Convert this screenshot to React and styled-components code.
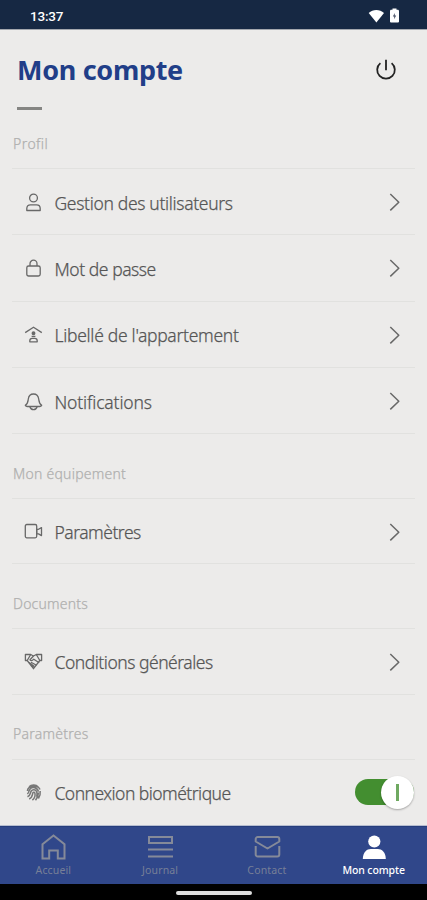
import { useState } from 'react';
import styled, { createGlobalStyle } from 'styled-components';

const GlobalStyle = createGlobalStyle`
    * {
        box-sizing: border-box;
    }

    body {
        margin: 0;
        background: #ecebea;
        font-family: "Noto Sans", "Open Sans", sans-serif;
    }
`;

const Screen = styled.div`
    display: flex;
    flex-direction: column;
    width: 427px;
    height: 900px;
    overflow: hidden;
    background: #ecebea;
`;

const StatusBar = styled.div`
    display: flex;
    flex: none;
    align-items: center;
    justify-content: space-between;
    height: 29px;
    padding: 3px 26px 0 30px;
    background: #162843;
    box-shadow: 0 1px 0 #a3a7ae;
`;

const Clock = styled.span`
    color: #fff;
    font-family: Roboto, sans-serif;
    font-size: 13.5px;
    font-weight: 500;
    letter-spacing: -0.2px;
`;

const StatusIcons = styled.div`
    display: flex;
    align-items: center;
    gap: 4px;
    margin-top: -1px;
`;

const Header = styled.header`
    display: flex;
    flex: none;
    align-items: center;
    justify-content: space-between;
    height: 78px;
    padding: 3px 30px 0 17px;
`;

const Title = styled.h1`
    margin: 0;
    color: #213e88;
    font-size: 27px;
    font-weight: 700;
    line-height: 38px;
    letter-spacing: -0.3px;
`;

const PowerButton = styled.button`
    display: flex;
    padding: 0;
    border: 0;
    background: none;
`;

const TitleRule = styled.div`
    flex: none;
    width: 25px;
    height: 3px;
    margin: 0 0 0 17px;
    background: #858583;
`;

const Content = styled.main`
    flex: 1;
    min-height: 0;
    padding: 8px 12px 0;
    overflow: hidden;
`;

const SectionTitle = styled.h2`
    display: flex;
    align-items: center;
    height: ${({ $first }) => ($first ? 50 : 64)}px;
    margin: 0;
    padding: ${({ $first }) => ($first ? 0 : 14)}px 0 0 1px;
    color: #b0b0af;
    font-size: 14px;
    font-weight: 300;
    letter-spacing: ${({ $spacing }) => $spacing || 0}px;
    -webkit-text-stroke: 0.25px #b0b0af;
`;

const List = styled.div`
    border-top: 1px solid #e1e1df;
`;

const Row = styled.div`
    display: flex;
    align-items: center;
    height: ${({ $height }) => $height}px;
    padding: 1px ${({ $toggle }) => ($toggle ? 1 : 14)}px 0 11px;
    border-bottom: 1px solid #e1e1df;
`;

const RowLabel = styled.span`
    flex: 1;
    margin: 1px 0 0 10.5px;
    color: #565656;
    font-size: 17.5px;
    font-weight: 300;
    line-height: 24px;
    white-space: nowrap;
    letter-spacing: ${({ $spacing }) => $spacing || 0}px;
    -webkit-text-stroke: 0.25px #565656;
`;

const Icon = styled.svg`
    flex: none;
    fill: none;
    stroke: ${({ $color }) => $color || '#686868'};
    stroke-width: ${({ $weight }) => $weight || 1.3};
    stroke-linejoin: round;
`;

const Toggle = styled.button`
    display: flex;
    justify-content: ${({ $on }) => ($on ? 'flex-end' : 'flex-start')};
    align-items: center;
    width: 59px;
    height: 26px;
    margin-top: -1px;
    padding: 0;
    border: 0;
    border-radius: 13px;
    background: ${({ $on }) => ($on ? '#438e30' : '#aaa')};
`;

const Knob = styled.span`
    display: flex;
    flex: none;
    align-items: center;
    justify-content: center;
    width: 33px;
    height: 33px;
    border-radius: 50%;
    background: #fff;
    box-shadow: 0 1px 2px rgba(0, 0, 0, 0.3);
`;

const KnobMark = styled.span`
    width: 3px;
    height: 17px;
    background: #6fa961;
`;

const TabBar = styled.nav`
    display: grid;
    flex: none;
    grid-template-columns: repeat(4, 1fr);
    height: 58px;
    border-top: 1px solid #263d7c;
    background: #30478a;
    box-shadow: 0 -1px 0 #b6bdd0;
`;

const Tab = styled.a`
    display: flex;
    flex-direction: column;
    align-items: center;
    padding-top: 6px;
    color: ${({ $active }) => ($active ? '#fff' : '#777f97')};
    font-size: 10.5px;
    font-weight: ${({ $active }) => ($active ? 500 : 400)};
    line-height: 14px;
    letter-spacing: ${({ $active }) => ($active ? -0.1 : 0.15)}px;
`;

const TabLabel = styled.span`
    margin-top: 2px;
`;

const GestureBar = styled.div`
    display: flex;
    flex: none;
    align-items: center;
    justify-content: center;
    height: 16px;
    padding-top: 2px;
    background: #000;
`;

const GestureHandle = styled.span`
    width: 76px;
    height: 4px;
    border-radius: 2px;
    background: #dcdcdc;
`;

const icons = {
    user: (
        <>
            <circle cx="10.5" cy="6" r="3.9" />
            <path d="M3.800 18.500v-2c0-2.400 1.500-3.700 3.600-3.700h6.200c2.100 0 3.600 1.300 3.600 3.700v2z" />
        </>
    ),
    lock: (
        <>
            <rect x="3.800" y="8" width="13.400" height="10" rx="1.800" />
            <path d="M7 8V5.700a3.500 3.500 0 0 1 7 0V8" />
        </>
    ),
    home: (
        <>
            <path d="M2.200 8.600 10.500 3.200l8.300 5.400" />
            <circle cx="10.500" cy="9.300" r="1.300" fill="#686868" />
            <path d="M6.800 17.800v-1c0-1.600 1-2.500 2.400-2.500h2.600c1.400 0 2.400.9 2.400 2.500v1z" />
            <path d="M8.600 12.400h3.800" />
        </>
    ),
    bell: (
        <>
            <path d="M2.300 14.300c2.600-1.600 2.600-3.600 3-6.300.4-3 2.300-5 5.200-5s4.800 2 5.200 5c.4 2.700.4 4.700 3 6.300-.4.9-1.100 1.200-2 1.200H4.300c-.9 0-1.600-.3-2-1.200z" />
            <path d="M6.800 15.500c.5 1.800 1.700 3.200 3.700 3.200s3.200-1.400 3.700-3.200" />
        </>
    ),
    camera: (
        <>
            <rect x="2.300" y="3.500" width="11.400" height="13.300" rx="1.500" />
            <path d="M13.700 8.300h1.800l3-1.700v8l-3-1.700h-1.800z" />
        </>
    ),
    handshake: (
        <>
            <path d="M7.700 3.500H2.400v6h1.800l6.300 8.200 6.300-8.200h1.800v-6h-5.300L10.500 5z" />
            <path d="m4.200 9.500 3.500-6M10.500 5 7 8.800c1 1.300 2.600.9 3.800-.6l5.400 3.600M16.800 9.500l-3.500-6M6 11.500l5.500 4M8 11.200l5.500 3M8 14.500l2.500 1.500" />
        </>
    ),
    fingerprint: (
        <g stroke="#777" strokeWidth="1.5">
            <path d="M6 4.800C8.500 2.300 13 2.300 15.200 5M4.400 9c.3-5 10.500-7 12.600-1.500M4.300 12c2-1.500 1-2.700 2.600-4.700 2.400-3 7.600-1.800 8.600 2.300M4.500 14.800c3.400-1.500 2.500-3.800 3.700-5.800 1.300-2 4.700-1.600 5.500.8.500 1.600.4 3.500 0 5M6.200 17c3.300-1.500 3.100-4.100 3.600-6 .3-1 1.800-1 2.100.1.500 2.200 0 5-2.500 7M17.200 9c.4 3.300-.3 5.300-1.800 7.500M12.500 18.200c2-2.300 3-4.600 3-7.600" />
        </g>
    ),
};

const sections = [
    {
        title: 'Profil',
        spacing: 0.45,
        height: 66.3,
        rows: [
            { icon: 'user', label: 'Gestion des utilisateurs', spacing: -0.33 },
            { icon: 'lock', label: 'Mot de passe', spacing: -0.45 },
            { icon: 'home', label: "Libellé de l'appartement", spacing: -0.29 },
            { icon: 'bell', label: 'Notifications', spacing: -0.15 },
        ],
    },
    {
        title: 'Mon équipement',
        spacing: 0.25,
        height: 65.2,
        rows: [{ icon: 'camera', label: 'Paramètres', spacing: -0.5 }],
    },
    {
        title: 'Documents',
        spacing: 0.2,
        height: 65.2,
        rows: [{ icon: 'handshake', label: 'Conditions générales', spacing: -0.48 }],
    },
    {
        title: 'Paramètres',
        spacing: 0.25,
        height: 66.3,
        rows: [{ icon: 'fingerprint', label: 'Connexion biométrique', spacing: -0.53, toggle: true }],
    },
];

const tabs = [
    {
        label: 'Accueil',
        drawing: <path d="M3.500 11.200 14.500 2.500l11 8.700V25.500h-6.700v-8h-8.600v8H3.500z" strokeLinejoin="miter" />,
    },
    {
        label: 'Journal',
        drawing: <path d="M3 4h23v6H3zM2 16.500h25M2 23.500h25" strokeLinejoin="miter" />,
    },
    {
        label: 'Contact',
        drawing: (
            <>
                <path d="M2.700 13v8.500a2 2 0 0 0 2 2h19.600a2 2 0 0 0 2-2V13" />
                <path d="M2.700 8.500V6a2 2 0 0 1 2-2h19.600a2 2 0 0 1 2 2v2.500l-11.800 7z" />
            </>
        ),
    },
    {
        label: 'Mon compte',
        active: true,
        drawing: (
            <g fill="#fff" stroke="none">
                <circle cx="14.300" cy="8.500" r="6.100" />
                <path d="M2.800 26c.2-7 4-10 8-10h7c4 0 7.800 3 8 10z" />
            </g>
        ),
    },
];

const SettingRow = ({ row, height }) => {
    const [on, setOn] = useState(true);

    return (
        <Row $height={height} $toggle={row.toggle}>
            <Icon width="21" height="21" viewBox="0 0 21 21">{icons[row.icon]}</Icon>
            <RowLabel $spacing={row.spacing}>{row.label}</RowLabel>
            {row.toggle ? (
                <Toggle $on={on} onClick={() => setOn(!on)} aria-label={row.label}>
                    <Knob><KnobMark /></Knob>
                </Toggle>
            ) : (
                <Icon width="13" height="20" viewBox="0 0 13 20" $weight={1.5}>
                    <path d="M2.300 2 10.800 10.200 2.300 18.400" />
                </Icon>
            )}
        </Row>
    );
};

const App = () => {
    return (
        <>
            <GlobalStyle />
            <Screen>
                <StatusBar>
                    <Clock>13:37</Clock>
                    <StatusIcons>
                        <svg width="17" height="14" viewBox="0 0 17 14">
                            <path d="M.7 4C4.800 0 11.800 0 16 4L8.400 13.500z" fill="#fff" />
                        </svg>
                        <svg width="12" height="15" viewBox="0 0 12 15">
                            <path d="M3.500.5h4v1.300h1.200c.6 0 1.300.5 1.300 1.100v10.500c0 .6-.7 1.100-1.300 1.100H2.300c-.6 0-1.300-.5-1.300-1.100V2.900c0-.6.7-1.100 1.300-1.100h1.200z" fill="#fff" />
                            <path d="M5.800 5 3.800 8.500h1.400v2.700l2-3.700H5.800z" fill="#4b5368" />
                        </svg>
                    </StatusIcons>
                </StatusBar>
                <Header>
                    <Title>Mon compte</Title>
                    <PowerButton aria-label="Déconnexion">
                        <Icon width="22" height="22" viewBox="0 0 22 22" $color="#222" $weight={1.8}>
                            <path d="M5.400 4.100a8.800 8.800 0 1 0 11.200 0M11 .8v10.500" />
                        </Icon>
                    </PowerButton>
                </Header>
                <TitleRule />
                <Content>
                    {sections.map((section, i) => (
                        <section key={section.title}>
                            <SectionTitle $first={i === 0} $spacing={section.spacing}>{section.title}</SectionTitle>
                            <List>
                                {section.rows.map((row) => (
                                    <SettingRow key={row.label} row={row} height={section.height} />
                                ))}
                            </List>
                        </section>
                    ))}
                </Content>
                <TabBar>
                    {tabs.map((tab) => (
                        <Tab key={tab.label} $active={tab.active}>
                            <Icon width="28" height="28" viewBox="0 0 28 28" $color="#858a99" $weight={2}>
                                {tab.drawing}
                            </Icon>
                            <TabLabel>{tab.label}</TabLabel>
                        </Tab>
                    ))}
                </TabBar>
                <GestureBar>
                    <GestureHandle />
                </GestureBar>
            </Screen>
        </>
    );
};

export default App;
